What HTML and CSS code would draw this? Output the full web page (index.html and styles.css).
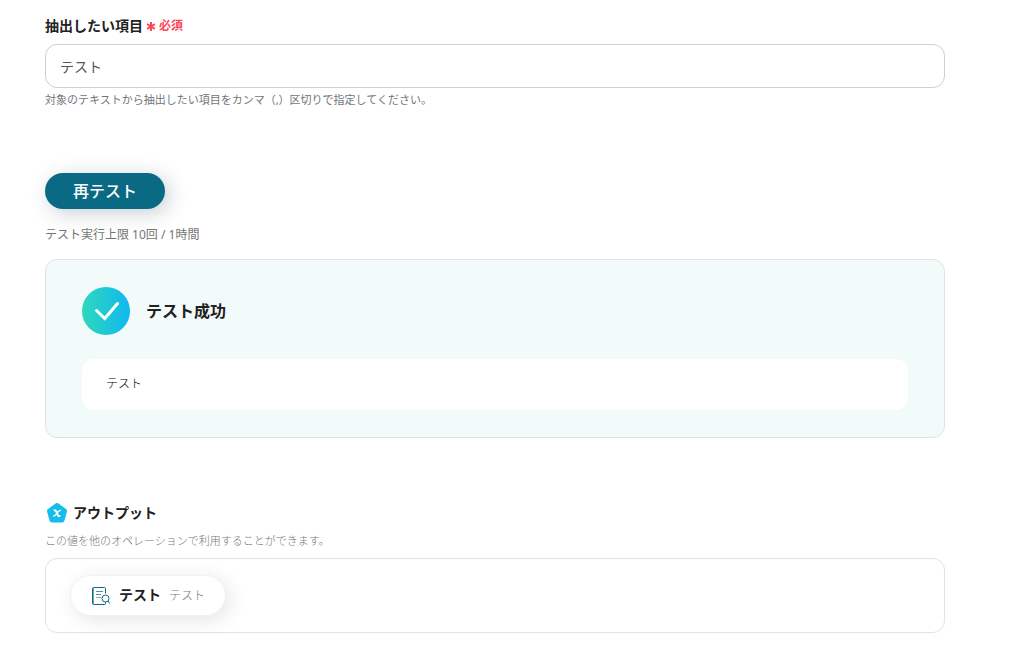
FILE: index.html
```html
<!DOCTYPE html>
<html lang="ja">
<head>
<meta charset="utf-8">
<meta name="viewport" content="width=device-width, initial-scale=1">
<title>オペレーションのテスト</title>
<link rel="stylesheet" href="styles.css">
</head>
<body>
<main class="page">
  <section class="field">
    <div class="field-head">
      <label class="field-label" for="items">抽出したい項目</label>
      <span class="required">
        <svg class="asterisk" viewBox="0 0 10 10" aria-hidden="true"><path d="M5 1v9M1.200 3.200l7.600 4.600M8.800 3.200L1.200 7.800"/></svg>
        必須
      </span>
    </div>
    <input class="text-input" id="items" type="text" value="テスト" aria-describedby="items-hint">
    <p class="hint" id="items-hint">対象のテキストから抽出したい項目をカンマ（,）区切りで指定してください。</p>
  </section>

  <section class="test">
    <button class="test-button" type="button">再テスト</button>
    <p class="limit">テスト実行上限 10回 / 1時間</p>
    <div class="result">
      <div class="result-head">
        <svg class="result-icon" viewBox="0 0 48 48" aria-hidden="true">
          <defs><linearGradient id="success" x1="0" y1="0" x2="1" y2="0"><stop offset="0" stop-color="#2fd8bb"/><stop offset="1" stop-color="#0fb8f0"/></linearGradient></defs>
          <circle cx="24" cy="24" r="24" fill="url(#success)"/>
          <path d="M14.500 23.500l8.300 8L35.500 16.500" fill="none" stroke="#fff" stroke-width="3" stroke-linecap="round"/>
        </svg>
        <h2 class="result-title">テスト成功</h2>
      </div>
      <p class="result-body">テスト</p>
    </div>
  </section>

  <section class="output">
    <div class="output-head">
      <svg class="output-icon" viewBox="0 0 20 20" aria-hidden="true">
        <path d="M10 2.500L17.500 8l-2.500 9H5L2.500 8z" fill="#14bdee" stroke="#14bdee" stroke-width="5" stroke-linejoin="round"/>
        <path d="M7.500 7.200c1.500 0 2 1.300 2.500 3 .5 1.800 1 2.900 2.500 2.900" fill="none" stroke="#fff" stroke-width="2" stroke-linecap="round"/>
        <path d="M13.500 7.300c-1.500 0-2.500 1.300-3.500 2.900s-1.900 2.900-3.500 2.900" fill="none" stroke="#fff" stroke-width="1.300" stroke-linecap="round"/>
      </svg>
      <h2 class="output-title">アウトプット</h2>
    </div>
    <p class="output-note">この値を他のオペレーションで利用することができます。</p>
    <div class="output-box">
      <div class="chip">
        <svg class="chip-icon" viewBox="0 0 20 20" aria-hidden="true" fill="none" stroke="#0b6a83">
          <path d="M14.500 7.500V2.500a1 1 0 0 0-1-1h-11a1 1 0 0 0-1 1v15a1 1 0 0 0 1 1h11a1 1 0 0 0 1-1v-1.500"/>
          <path d="M2.500 2v16" stroke="#6fa9b8"/>
          <path d="M5 5.500h7M5 8.500h5" stroke="#4b92a5"/>
          <path d="M5 11.500h5" stroke="#7db1bf"/>
          <circle cx="14.500" cy="12.500" r="3.500" fill="#fff"/>
          <path d="M17 15l1.500 2.500"/>
        </svg>
        <span class="chip-text">
          <span class="chip-name">テスト</span>
          <span class="chip-type">テスト</span>
        </span>
      </div>
    </div>
  </section>
</main>
</body>
</html>
```
FILE: styles.css
```css
* {
  box-sizing: border-box;
}

body {
  margin: 0;
  background: #fff;
  color: #212121;
  font-family: "Noto Sans", "Noto Sans CJK JP", sans-serif;
  font-size: 12px;
  line-height: 20px;
}

h2,
p {
  margin: 0;
}

.page {
  display: flex;
  flex-direction: column;
  gap: 63px;
  padding: 16px 84px 24px 45px;
}

.field-head {
  display: flex;
  align-items: center;
  gap: 3px;
  margin-bottom: 8px;
}

.field-label,
.output-title {
  font-size: 14px;
  font-weight: 700;
}

.required {
  display: flex;
  align-items: center;
  gap: 3px;
  color: #ff4657;
  font-weight: 700;
}

.asterisk {
  width: 10px;
  height: 10px;
  fill: none;
  stroke: currentColor;
  stroke-width: 2;
}

.text-input {
  display: block;
  width: 100%;
  height: 44px;
  padding: 0 14px;
  border: 1px solid #cdced6;
  border-radius: 12px;
  background: #fff;
  color: #555;
  font: inherit;
  font-size: 14px;
}

.hint {
  margin-top: 2px;
  color: #6f767b;
  font-size: 11px;
}

.test-button {
  display: block;
  height: 36px;
  padding: 0 28px;
  border: 0;
  border-radius: 18px;
  background: #0b6a83;
  box-shadow: 4px 4px 20px rgba(30, 50, 80, 0.24);
  color: #fff;
  font: inherit;
  font-size: 16px;
  font-weight: 500;
}

.limit {
  margin: 16px 0 14px;
  color: #757575;
}

.result {
  padding: 27px 36px;
  border: 1px solid #e0e3e3;
  border-radius: 12px;
  background: #f2fbfa;
}

.result-head {
  display: flex;
  align-items: center;
  gap: 16px;
  margin-bottom: 24px;
}

.result-icon {
  width: 48px;
  height: 48px;
}

.result-title {
  font-size: 16px;
  font-weight: 700;
}

.result-body {
  padding: 15px 24px 16px;
  border-radius: 12px;
  background: #fff;
  color: #000;
  font-weight: 300;
}

.output-head {
  display: flex;
  align-items: center;
  gap: 4px;
  margin-bottom: 6px;
}

.output-icon {
  width: 24px;
  height: 24px;
  padding: 2px;
}

.output-note {
  margin-bottom: 7px;
  color: #777;
  font-size: 11px;
  font-weight: 300;
}

.output-box {
  display: flex;
  padding: 16px 24px;
  border: 1px solid #e3e3e5;
  border-radius: 12px;
}

.chip {
  display: flex;
  align-items: center;
  gap: 8px;
  height: 41px;
  padding: 0 20px;
  border: 1px solid #f2f2f2;
  border-radius: 21px;
  background: #fff;
  box-shadow: 4px 4px 20px rgba(0, 0, 0, 0.1);
}

.chip-icon {
  width: 20px;
  height: 20px;
}

.chip-text {
  display: flex;
  align-items: baseline;
  gap: 8px;
}

.chip-name {
  font-size: 14px;
  font-weight: 700;
}

.chip-type {
  color: #777;
  font-weight: 300;
}
```
